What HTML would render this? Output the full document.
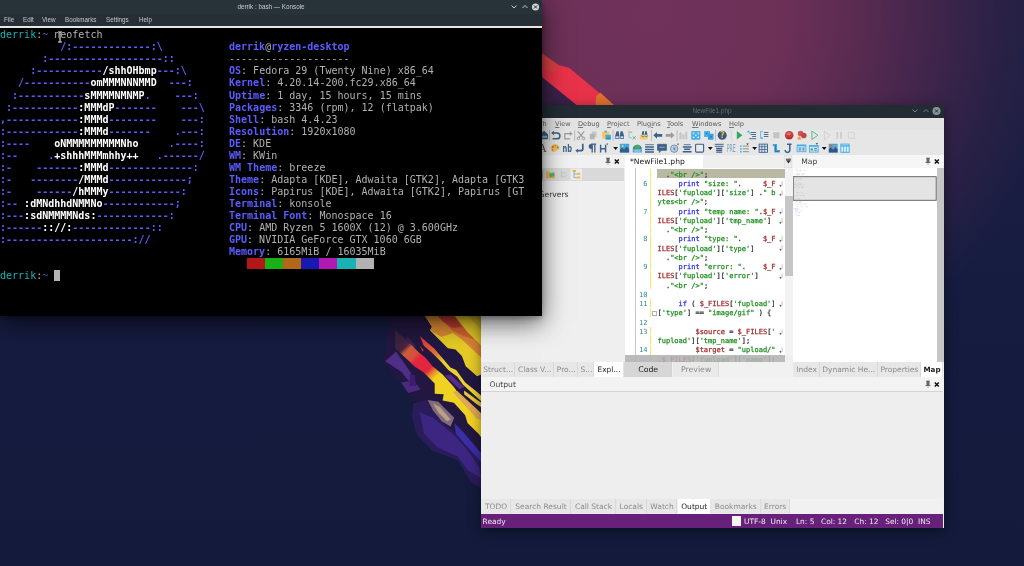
<!DOCTYPE html>
<html lang="en"><head><meta charset="utf-8"><title>Desktop</title>
<style>
html,body{margin:0;padding:0;}
body{width:1024px;height:566px;overflow:hidden;background:#151a3c;font-family:"DejaVu Sans","Liberation Sans",sans-serif;}
#desk{position:relative;width:1024px;height:566px;overflow:hidden;
 background:
  radial-gradient(ellipse 410px 390px at 655px 15px, #70325a 0%, #6c3057 32%, #592b51 50%, #40254b 68%, rgba(44,33,70,0.85) 84%, rgba(29,30,66,0) 100%),
  linear-gradient(180deg,#1d1f44 0%, #161c40 50%, #131a3b 100%);}
#kon{position:absolute;left:0;top:0;width:542px;height:315.5px;background:#000;box-shadow:0 7px 24px rgba(0,0,0,.62),0 2px 6px rgba(0,0,0,.3);}
.ktitle{position:absolute;left:0;top:0;width:542px;height:14px;background:#283339;}
.kt{position:absolute;left:0;width:542px;text-align:center;top:3px;font-size:6.3px;line-height:8px;color:#c9cdd0;font-family:"Liberation Sans",sans-serif;}
.kbtn{position:absolute;left:510px;top:1px;}
.kmenu{position:absolute;left:0;top:14px;width:542px;height:12px;background:#252f35;font-size:6.3px;line-height:12px;color:#c5c9cc;font-family:"Liberation Sans",sans-serif;}
.kmenu span{position:absolute;top:0}
.kmenu span:nth-child(1){left:4px}.kmenu span:nth-child(2){left:23px}.kmenu span:nth-child(3){left:42px}
.kmenu span:nth-child(4){left:65px}.kmenu span:nth-child(5){left:106px}.kmenu span:nth-child(6){left:139px}
.kline{position:absolute;left:0;top:26px;width:542px;height:2px;background:#e6e6e6;}
.kterm{position:absolute;left:0;top:28px;margin:0;padding-top:1.3px;width:542px;height:285.7px;overflow:hidden;
 font-family:"DejaVu Sans Mono","Liberation Mono",monospace;font-size:10px;line-height:12.04px;color:#b2b2b2;letter-spacing:0.005px;}
.kterm b{font-weight:bold}
.kterm .b{color:#5c5cff}
.kterm .w{color:#fff}
.kterm .g{color:#b2b2b2}
.kterm .c{color:#18b2b2}
.kterm .db{color:#4050a8}
.kterm .cur{background:#b2b2b2}
.ibeam{position:absolute;left:57.4px;top:31px;}
#ide{position:absolute;left:481px;top:105px;width:462.6px;height:422.5px;background:#efefef;box-shadow:0 3px 12px rgba(0,0,0,.45);font-size:7.5px;color:#3b3b3b;overflow:hidden}
#ide > *{position:absolute}
.ititle{left:0;top:0;width:463px;height:12.5px;background:#222c32}
.it{position:absolute;left:0;width:462px;text-align:center;top:2.3px;font-size:6.4px;line-height:8px;color:#626c71;font-family:"Liberation Sans",sans-serif}
.ibtn{position:absolute;left:430.4px;top:-0.2px}
.imenu{left:0;top:12.5px;width:463px;height:12px;background:#e3e3e3;font-size:6.6px;line-height:12px;color:#5a5a5a}
.imenu span{position:absolute;top:0}
.imenu u{text-decoration:underline;text-decoration-thickness:0.6px;text-underline-offset:0.6px;text-decoration-color:#777}
.itool{left:0;top:24.5px;width:463px;height:25.5px;background:#e6e6e6}
.lhead{left:0;top:50px;width:144px;height:13px;background:#f1f1f1}
.pin{width:16px;height:10px;line-height:0}
.etabbar{left:144px;top:50px;width:159px;height:13px;background:#efefef}
.etab{left:144px;top:50px;width:77.5px;height:13px;background:#fff;color:#222;font-size:7.6px;line-height:13px;text-indent:5px;white-space:nowrap}
.edrop{left:302.8px;top:50px;width:8.6px;height:13px;background:#ececec;line-height:0;box-shadow:inset 0 0 0 0.5px #dadada}
.mhead{left:312.3px;top:50px;width:150px;height:13px;background:#f6f6f6;font-size:7.6px;line-height:13px;text-indent:8px;color:#444}
.lpanel{left:0;top:63px;width:144px;height:194px;background:#efefef}
.ltool{position:absolute;left:0;top:0.2px;width:143px;height:12.6px;background:#d9d9d9}
.ltxt{position:absolute;font-size:7.6px;line-height:10px;color:#333}
.editor{left:144px;top:63px;width:160px;height:194px;background:#fff;overflow:hidden}
.vscroll{left:304.4px;top:63px;width:7.9px;height:187px;background:#f3f3f3}
.vthumb{position:absolute;left:0;top:28.4px;width:7.9px;height:79.5px;background:#c6c6c6}
.hscroll{left:143.6px;top:250px;width:160.6px;height:7px;background:rgba(178,178,178,.88)}
.map{left:312.3px;top:63px;width:150px;height:194px;background:#fff}
.mscroll{position:absolute;left:143.4px;top:0;width:7px;height:194px;background:#c6c6c6}
.btabs{left:0;top:257px;width:462px;height:15px;background:#f1f1f1}
.tab{position:absolute;top:0;height:15px;line-height:15px;text-align:center;white-space:nowrap;background:#e7e7e7;color:#8b8b8b;box-shadow:inset -0.6px 0 0 #d3d3d3;font-size:7.5px}
.tab.act{background:#fff;color:#1c1c1c}
.tab.bold{font-weight:bold;font-size:7.2px}
.tab.code{background:#d6d6d6;color:#222;font-size:7.8px}
.tab.prev{background:#e9e9e9;color:#8b8b8b;font-size:7.8px}
.ohead{left:0;top:272px;width:462px;height:14px;background:#f3f3f3;border-bottom:0.8px solid #d4d4d4}
.otitle{position:absolute;left:8.5px;top:0.9px;line-height:14px;font-size:7.6px;color:#444}
.obody{left:0;top:287px;width:462px;height:107px;background:#eeeeee}
.otabs{left:0;top:394px;width:462px;height:15.2px;background:#f1f1f1}
.status{left:0;top:409.2px;width:462px;height:13.4px;background:#68217a;color:#eee;font-size:7.4px;line-height:13.4px}
.status span{position:absolute;top:0.6px;white-space:nowrap}
.sq{position:absolute;top:2.2px;width:9.3px;height:9.3px;background:#f4f4f4}
.mline{position:absolute;left:10.3px;top:0;width:0.8px;height:194px;background:#c9c9c9}
.cl{position:absolute;left:0;width:160px;height:9.25px}
.cl pre{position:absolute;left:32.5px;top:1.6px;margin:0;font-family:"DejaVu Sans Mono","Liberation Mono",monospace;font-size:7px;line-height:9.25px;color:#333;font-weight:normal;-webkit-text-stroke:0.25px currentColor}
.cl.hl{background:linear-gradient(90deg,transparent 32.3px,#b9b9a3 32.3px)}
.cl .ln{position:absolute;right:137.5px;top:1.6px;font-family:"DejaVu Sans Mono","Liberation Mono",monospace;font-size:7px;line-height:9.25px;color:#2f8c8c}
.cl .ym{position:absolute;left:24.6px;top:0.3px;width:1.1px;height:8.6px;background:#f3ea62}
.cl .fold{position:absolute;left:26.6px;top:2.8px;width:3.6px;height:3.6px;border:0.5px solid #b0b0b0;background:linear-gradient(#fff 1.5px,#aaa 1.5px,#aaa 2.1px,#fff 2.1px)}
.cl .wm{position:absolute;left:153.6px;top:2.3px}
.cl .k{color:#2b2be6}
.cl .s{color:#1d8f1d}
.cl .v{color:#a02a2a}

#wall{position:absolute;left:0;top:0}
.kterm,.kmenu,.ktitle{filter:blur(0.35px)}
#ide > *{filter:blur(0.3px)}

</style></head>
<body>
<div id="desk">
<svg id="wall" width="1024" height="566" viewBox="0 0 1024 566"><defs><filter id="bl" x="-5%" y="-5%" width="110%" height="110%"><feGaussianBlur stdDeviation="0.7"/></filter></defs><g filter="url(#bl)"><polygon points="528.6,59.8 542.2,74.1 581.5,109.1 528.6,109.1" fill="#3a2449"/><polygon points="525.5,40.7 542.2,53.4 558.9,65.3 569.2,67.7 613.0,104.3 617.7,109.1 581.5,109.1 542.2,77.3 525.5,63.0" fill="#e8304a"/><polygon points="525.5,40.7 542.2,53.4 558.9,65.3 554.1,72.5 542.2,67.7 525.5,55.0" fill="#d6443c" opacity="0.8"/><polygon points="596.2,96.0 600.2,92.4 613.0,104.3 617.7,109.1 597.8,109.1 595.5,102.7" fill="#e0702f"/><polygon points="390.6,313.5 425.9,313.5 482.4,368.3 482.4,483.0 471.8,479.5 433.0,423.0 401.2,384.2 383.5,363.0" fill="#221a40" opacity="0.9"/><polygon points="395.9,351.5 403.0,361.2 413.5,377.1 410.0,382.4 401.2,371.8 385.3,361.2" fill="#4f2d88"/><polygon points="401.2,382.4 413.5,380.6 420.6,389.4 408.2,393.0" fill="#482a80"/><polygon points="406.5,336.5 415.3,345.3 415.3,368.3 410.0,363.0" fill="#3a2152"/><polygon points="413.5,403.5 427.7,400.0 433.0,410.6 441.8,421.2 455.9,433.5 464.7,444.1 481.0,461.8 481.0,488.3 471.8,483.0 457.7,460.0 433.0,451.2 417.1,435.3 411.8,417.7" fill="#2c1d5a"/><polygon points="419.7,412.4 433.0,417.7 454.2,435.3 468.3,451.2 478.9,467.1 481.0,477.7 468.3,470.6 457.7,456.5 438.3,447.7 424.1,433.5" fill="#41288a" opacity="0.85"/><polygon points="454.2,423.0 463.0,431.8 481.0,453.0 481.0,461.8 464.7,444.1 455.9,433.5" fill="#3a2ea6"/><polygon points="427.7,400.0 438.3,401.8 454.2,417.7 450.6,426.5 441.8,421.2 433.0,410.6" fill="#84697c"/><polygon points="433.0,403.5 440.0,407.1 450.6,419.4 447.1,421.2 438.3,412.4" fill="#b8a084"/><linearGradient id="s3" gradientUnits="userSpaceOnUse" x1="400" y1="338" x2="452" y2="392"><stop offset="0" stop-color="#3a2040"/><stop offset="0.13" stop-color="#4a2440"/><stop offset="0.19" stop-color="#cc5c3a"/><stop offset="0.3" stop-color="#d8503a"/><stop offset="0.37" stop-color="#e3283c"/><stop offset="0.57" stop-color="#e3283c"/><stop offset="0.64" stop-color="#e88a30"/><stop offset="0.71" stop-color="#f0d222"/><stop offset="1" stop-color="#f0d222"/></linearGradient><polygon points="395,330 411,344.5 418.6,352.2 425,357.3 432.6,366.2 442.6,374.5 453.9,387 459.6,394.9 481,415.2 481,437 478.8,434 467.5,423.1 465.2,415.2 453.9,402.8 442.6,400.5 443.7,394.3 434.7,393.7 434.7,383.6 423.4,372.3 416.1,367.4 403.4,356 395,348" fill="url(#s3)"/><polygon points="452.8,392 457.3,390.9 481,413 481,419.8 476.5,418.6" fill="#e0a850"/><polygon points="444.9,375.7 450.5,374.5 464.1,387 459.6,389.2" fill="#5a2a8c"/><polygon points="409.7,373.8 414.8,375.1 416.1,386.0 409.7,386.0" fill="#3c1c6c"/><linearGradient id="s2" gradientUnits="userSpaceOnUse" x1="420" y1="337" x2="450" y2="368"><stop offset="0" stop-color="#e02c3c"/><stop offset="0.3" stop-color="#e0503a"/><stop offset="0.55" stop-color="#e07a30"/><stop offset="0.8" stop-color="#ecd030"/><stop offset="1" stop-color="#ecd030"/></linearGradient><polygon points="419.9,336.3 423.7,339.4 433.9,348.3 442.8,358.5 450.4,367.4 456.2,370 465.2,382.4 476.5,391.5 481,395.5 481,401 476.5,397.1 463,384.7 457.3,376.8 448.3,370 441.5,362.3 431.4,352.2 423.7,345.8" fill="url(#s2)"/><polygon points="464.1,390.4 476.5,399.4 481,402.5 481,407 476.5,403.9 464.1,394.3" fill="#e6c830"/><polygon points="419.9,345.8 423.7,350.3 422.4,351.5" fill="#e02c3c"/><polygon points="423.7,314.0 483.0,314.0 483.0,373.8 477.1,376.3 465.7,366.2 461.9,356.0 455.5,349.6 447.9,348.3 430.1,330.5 432.0,326.7" fill="#e6ca28"/><polygon points="423.7,314.0 436.4,314.0 442.8,321.6 453.0,333.1 441.5,336.9 430.1,330.5 432.0,326.7" fill="#dc8a35"/><polygon points="436.4,314.0 453.0,314.0 463.2,326.7 467.0,331.8 483.0,347.3 483.0,359.2 461.9,339.4 453.0,333.1 442.8,321.6" fill="#d98436"/><polygon points="436.4,314.0 453.0,314.0 463.2,326.7 467.0,331.8 474.6,339.4 461.9,335.6 453.0,330.5 442.8,321.6" fill="#d06230"/><polygon points="436.4,314.0 453.0,314.0 461.9,326.7 453.0,328.0 442.8,321.6" fill="#b83a30"/><polygon points="465.7,314.0 483.0,314.0 483.0,331.8" fill="#c4ae30" opacity="0.7"/></g></svg>
<div id="ide">
<div class="ititle"><span class="it">NewFile1.php</span><svg class="ibtn" width="30" height="12" viewBox="0 0 30 12"><path d="M1.5 4.5 L4 7 L6.5 4.5" fill="none" stroke="#747d82" stroke-width="1"/><path d="M12.5 7 L15 4.5 L17.5 7" fill="none" stroke="#747d82" stroke-width="1"/><circle cx="25.5" cy="6" r="4" fill="#8d9498"/><path d="M24 4.5 L27 7.5 M27 4.5 L24 7.5" stroke="#232d33" stroke-width="1"/></svg></div>
<div class="imenu">
<span style="left:43px">Search</span>
<span style="left:74px"><u>V</u>iew</span>
<span style="left:97px"><u>D</u>ebug</span>
<span style="left:126px"><u>P</u>roject</span>
<span style="left:156px">Plug<u>i</u>ns</span>
<span style="left:186px"><u>T</u>ools</span>
<span style="left:211px"><u>W</u>indows</span>
<span style="left:248px"><u>H</u>elp</span>
</div>
<div class="itool">
<svg width="462" height="25.5" viewBox="0 0 462 25.5" style="position:absolute;left:0;top:0"><g transform="translate(63 5.3)"><path d="M-4 -1 L0 -4.5 L4 -1 V4 H-4 Z" fill="#3c6088"/><rect x="-3" y="0.5" width="6" height="2" fill="#9fb6cc"/></g><rect x="68.2" y="-0.2" width="0.7" height="11" fill="#a8a8a8"/><g transform="translate(74.8 5.3)"><path d="M-2.5 -2.3 H1.2 A2.9 2.9 0 0 1 1.2 3.5 H-3.2" fill="none" stroke="#3c6088" stroke-width="1.5"/><path d="M-4.6 -2.3 L-1.8 -4.6 V0 Z" fill="#3c6088"/></g><g transform="translate(86.8 5.3)"><path d="M3.2 -1.6 H-3 V3.6 H2.5" fill="none" stroke="#9b9b9b" stroke-width="1.2"/><path d="M4.8 -1.6 L2 -4 V0.8 Z" fill="#9b9b9b"/></g><rect x="93.4" y="-0.2" width="0.7" height="11" fill="#a8a8a8"/><g transform="translate(100 5.3)"><path d="M-3.2 -4 L2 2.4 M3.2 -4 L-2 2.4" stroke="#9b9b9b" stroke-width="1.2" fill="none"/><circle cx="-2.6" cy="3.1" r="1.3" fill="none" stroke="#9b9b9b" stroke-width="1"/><circle cx="2.6" cy="3.1" r="1.3" fill="none" stroke="#9b9b9b" stroke-width="1"/></g><g transform="translate(112.4 5.3)"><rect x="-1.5" y="-3.8" width="4.6" height="5.6" fill="#c6c6c6"/><rect x="-3.6" y="-1.6" width="4.8" height="5.6" fill="#b4b4b4"/></g><g transform="translate(125.4 5.3)"><rect x="-4.4" y="-3.6" width="7.4" height="7" rx="0.6" fill="#f6c95a"/><rect x="-2" y="-4.6" width="2.6" height="1.6" fill="#59a9df"/><rect x="-1" y="-0.6" width="5.6" height="5" rx="0.5" fill="#46a7e3"/><rect x="0.2" y="2.4" width="3.2" height="0.8" fill="#2c6d9e"/></g><rect x="131.7" y="-0.2" width="0.7" height="11" fill="#a8a8a8"/><g transform="translate(138.6 5.3)"><path d="M-4.3 3.8 V0 L-3 -4 H-1 L-0.3 0 V3.8 Z M4.3 3.8 V0 L3 -4 H1 L0.3 0 V3.8 Z" fill="#3c6088"/><rect x="-3.7" y="1" width="2.8" height="2" fill="#c7dced"/><rect x="0.9" y="1" width="2.8" height="2" fill="#c7dced"/></g><g transform="translate(151 5.3)"><path d="M-3 -2.5 V2.6 H0" fill="none" stroke="#7fc3d6" stroke-width="0.9"/><rect x="-4" y="-4.4" width="2.4" height="2" fill="#f0c46a"/><rect x="-1.6" y="-3.8" width="1.8" height="1.6" fill="#8bc1e8"/><path d="M0.6 1 L3.8 4 M3.8 1 L0.6 4" stroke="#53b184" stroke-width="0.9"/></g><g transform="translate(163.4 5.3)"><path d="M-4.6 -0.5 H4 L3 4.2 H-4.6 Z" fill="#f6c95a"/><path d="M-2.6 1.5 V-1.5 L-1.8 -4.4 H-0.6 L-0.2 -1.5 V1.5 Z M2.9 1.5 V-1.5 L2.1 -4.4 H0.9 L0.5 -1.5 V1.5 Z" fill="#3c6088"/><rect x="-2.2" y="-0.6" width="1.7" height="1.5" fill="#d5e6f2"/><rect x="0.8" y="-0.6" width="1.7" height="1.5" fill="#d5e6f2"/></g><rect x="170.1" y="-0.2" width="0.7" height="11" fill="#a8a8a8"/><g transform="translate(177 5.3)"><path d="M-4.6 0 L-1 -3.4 V-1.4 H4.2 V1.4 H-1 V3.4 Z" fill="#3c6088"/></g><g transform="translate(188.9 5.3)"><path d="M4.6 0 L1 -3.4 V-1.4 H-4.2 V1.4 H1 V3.4 Z" fill="#9b9b9b"/></g><rect x="195.7" y="-0.2" width="0.7" height="11" fill="#a8a8a8"/><g transform="translate(202.3 5.3)"><path d="M-4 4 V-2 L-2.8 -3.6 L-1.6 -2 V4 Z M-0.8 4 V-1 H1.2 V4 Z M2 4 V-3.6 H4 V4 Z" fill="#c6c6c6"/></g><g transform="translate(214.8 5.3)"><rect x="-4.6" y="-4.4" width="9.2" height="8.8" rx="0.8" fill="#45b0ea"/><path d="M-3 -2.8 L-0.8 -2.8 L-3 -0.6 Z M3 -2.8 L0.8 -2.8 L3 -0.6 Z M-3 2.8 L-0.8 2.8 L-3 0.6 Z M3 2.8 L0.8 2.8 L3 0.6 Z" fill="#d8efff"/><circle cx="0" cy="0" r="0.9" fill="#d8efff"/></g><g transform="translate(227.7 5.3)"><rect x="-4.6" y="-4.2" width="6" height="6" rx="0.6" fill="#45b0ea"/><rect x="-0.8" y="-1.6" width="5.6" height="6" rx="0.6" fill="#3b9fdf"/><path d="M-3 -1.2 L-1 -2.6 M1 2.4 L3 1" stroke="#27638f" stroke-width="0.9"/></g><rect x="234.2" y="-0.2" width="0.7" height="11" fill="#a8a8a8"/><g transform="translate(241.2 5.3)"><circle cx="0" cy="0" r="4.5" fill="#375a80"/><text x="0" y="3" text-anchor="middle" font-family="DejaVu Sans,sans-serif" font-weight="bold" font-size="8" fill="#f0c040">?</text></g><g transform="translate(250.2 5.3)"><path d="M-1.5 -5.5 Q1.6 -3 0.2 0 Q-1.2 3 1.6 5.5" fill="none" stroke="#c9c9c9" stroke-width="0.7"/></g><g transform="translate(258.2 5.3)"><path d="M-2.4 -4.2 L3.2 0 L-2.4 4.2 Z" fill="#2fa862"/></g><g transform="translate(270.7 5.3)"><path d="M-1 -2.8 H4.4 M-1 -0.8 H4.4 M0.4 1.2 H4.4 M-2.4 3.4 H4.4" stroke="#3c6088" stroke-width="0.9"/><path d="M-3.6 -3.8 Q-1.6 -4.6 -1.8 -1" fill="none" stroke="#45b0ea" stroke-width="0.8"/><circle cx="-3.6" cy="-3.6" r="0.9" fill="#45b0ea"/></g><g transform="translate(283 5.3)"><path d="M-0.2 -2.8 H4.4 M-0.2 -0.8 H4.4 M-0.2 1.2 H4.4" stroke="#3c6088" stroke-width="0.9"/><path d="M-1 -4 H-3.4 V3 H-1.4" fill="none" stroke="#45b0ea" stroke-width="0.8"/><path d="M-3.2 2 L-2 4.2 L-0.8 2.6 Z" fill="#45b0ea"/></g><g transform="translate(295.4 5.3)"><rect x="-3.2" y="-3" width="6.4" height="6" rx="0.4" fill="#c4c4c4"/></g><g transform="translate(308.2 5.3)"><circle cx="0" cy="0" r="4.3" fill="#c43c3c"/><ellipse cx="-0.4" cy="-1.6" rx="2.6" ry="1.5" fill="#de7c74" opacity=".8"/><path d="M-2.6 2.4 Q0 3.8 2.6 2.4" stroke="#8e2222" stroke-width="0.8" fill="none"/></g><g transform="translate(320.8 5.3)"><circle cx="-1.2" cy="-1.8" r="2.8" fill="#cf5656"/><circle cx="2" cy="0.2" r="2.8" fill="#c44444"/><path d="M-2.6 0.6 L-1.8 2.2 L0 2.4 L-1.4 3.4 L-1 5 L-2.6 4 L-4.2 5 L-3.8 3.4 L-5 2.4 L-3.4 2.2 Z" fill="#f59a23"/></g><g transform="translate(333.5 5.3)"><path d="M-2.6 -4.2 L3.4 0 L-2.6 4.2 Z" fill="none" stroke="#4fb87a" stroke-width="0.9"/></g><g transform="translate(345.9 5.3)"><path d="M-2.6 -4.2 L3.4 0 L-2.6 4.2 Z" fill="none" stroke="#cfcfcf" stroke-width="0.9"/></g><g transform="translate(358.2 5.3)"><rect x="-2.8" y="-3.4" width="1.8" height="6.8" fill="#cdcdcd"/><rect x="1" y="-3.4" width="1.8" height="6.8" fill="#cdcdcd"/></g><g transform="translate(370.4 5.3)"><rect x="-3" y="-3" width="6" height="6" rx="0.4" fill="none" stroke="#d0d0d0" stroke-width="0.9"/></g><g transform="translate(61.5 18.1)"><text x="0" y="4" text-anchor="middle" font-family="DejaVu Serif,serif" font-size="11" fill="#555">A</text></g><g transform="translate(74 18.1)"><path d="M-4.4 0.4 A4.4 4 0 1 1 3.8 2 Q2.4 1.2 1.4 2.4 Q0.6 4.2 -1.4 4 A4.4 4 0 0 1 -4.4 0.4 Z" fill="#f5c35c"/><circle cx="-2.2" cy="-1.2" r="1" fill="#e0553d"/><circle cx="0.4" cy="-2.4" r="1" fill="#e58a2a"/><circle cx="2.8" cy="-0.8" r="1.1" fill="#3fb77b"/><circle cx="-2.4" cy="1.8" r="0.8" fill="#c75cae"/></g><g transform="translate(86.3 18.1)"><text x="0" y="3.6" text-anchor="middle" font-family="DejaVu Sans Condensed,DejaVu Sans,sans-serif" font-size="10.5" font-weight="bold" fill="#3c6088" textLength="9.4" lengthAdjust="spacingAndGlyphs">nb</text></g><g transform="translate(99 18.1)"><path d="M2.8 -4.4 V0.6 Q2.8 2.6 0.8 2.6 H-2.4" fill="none" stroke="#3c6088" stroke-width="1.7"/><path d="M-4.6 2.6 L-2 0.6 V4.6 Z" fill="#3c6088"/></g><g transform="translate(111 18.1)"><path d="M0.2 -4 V4.4 M2.8 -4 V4.4 M-1 -4 H4.2" stroke="#3c6088" stroke-width="1.3" fill="none"/><path d="M0.2 -4 H-1 A2.4 2.4 0 0 0 -1 0.8 H0.2 Z" fill="#3c6088"/></g><g transform="translate(122.6 18.1)"><path d="M-3 -3.4 V4.4 M2 -3.4 V4.4 M-3 0.6 H2" stroke="#3c6088" stroke-width="1.4" fill="none"/><rect x="3" y="-4.6" width="1.4" height="1.2" fill="#555"/></g><g transform="translate(134.6 18.1)"><path d="M-2.4 -1 H2.4 L0 1.8 Z" fill="#111"/></g><g transform="translate(143.5 18.1)"><rect x="-4.6" y="-4.4" width="9.2" height="8.8" rx="0.6" fill="#47a4e0"/><path d="M-4.6 4.4 V1.6 L-2.4 -0.4 L-0.4 1.4 L2 -1.6 L4.6 1 V4.4 Z" fill="#2f5f8a"/><circle cx="-1.8" cy="-2.2" r="1" fill="#f3d15a"/></g><g transform="translate(156.3 18.1)"><path d="M-4.6 1.4 A4.6 4.8 0 0 1 4.6 1.4 Z" fill="#3a7f8c"/><path d="M-2 -2.8 Q0 -4.2 2.4 -2.6 Q3.6 -0.8 2 0.6 H-2.4 Q-3.4 -1.2 -2 -2.8 Z" fill="#3fae66"/><rect x="-4.6" y="1.4" width="9.2" height="3" rx="0.6" fill="#58a7dc"/><path d="M-3 2.9 H3" stroke="#d8ecf8" stroke-width="0.7"/></g><g transform="translate(168.5 18.1)"><path d="M-4.4 -3.4 H4.4" stroke="#3c6088" stroke-width="0.8"/><path d="M-4.4 -1 H4.4 M-4.4 1.4 H4.4 M-4.4 3.8 H4.4" stroke="#3c6088" stroke-width="1.5"/></g><g transform="translate(181 18.1)"><path d="M-4.4 -3.8 H4.4 V2.2 H-1 L-2.6 4.4 V2.2 H-4.4 Z" fill="#3c6088" stroke="#3c6088" stroke-width="0.8" stroke-linejoin="round"/><path d="M-2.6 -0.8 H2.8" stroke="#9bb7d1" stroke-width="0.9"/></g><g transform="translate(193.6 18.1)"><circle cx="-0.4" cy="0.6" r="3.7" fill="#b8cfe2" stroke="#6b8cad" stroke-width="0.9"/><path d="M-1.6 0.6 L0.6 -1.2 V2.4 Z" fill="#5b7fa3"/><path d="M2.2 -4.4 H4.6 L3.4 -3 Z" fill="#333"/></g><g transform="translate(206.2 18.1)"><path d="M-3.4 -3.4 H3.4" stroke="#3c6088" stroke-width="0.8"/><path d="M-4.4 -1.2 H4.4 M-3 1.2 H3 M-4.4 3.6 H4.4" stroke="#3c6088" stroke-width="1.5"/></g><g transform="translate(218.6 18.1)"><rect x="-4" y="-3.8" width="8" height="7.8" rx="0.8" fill="#eaeaea" stroke="#3c6088" stroke-width="1.1"/></g><g transform="translate(229.3 18.1)"><path d="M-2.4 -1 H2.4 L0 1.8 Z" fill="#111"/></g><g transform="translate(238.2 18.1)"><path d="M-4.4 -3.8 H4.4 M-4.4 -1.8 H4.4" stroke="#3c6088" stroke-width="1"/><path d="M-3 0.4 H3 M-3 2.2 H3 M-3 4 H3" stroke="#3c6088" stroke-width="1.3"/></g><g transform="translate(250.3 18.1)"><text x="0" y="4" text-anchor="middle" font-family="DejaVu Sans Condensed,DejaVu Sans,sans-serif" font-size="10.5" fill="#7ea2c2" textLength="9" lengthAdjust="spacingAndGlyphs" font-weight="normal">PRE</text></g><g transform="translate(263.5 18.1)"><path d="M-1.6 -2 H4.4 M-1.6 0.8 H4.4 M-1.6 3.6 H4.4" stroke="#777" stroke-width="0.8"/><circle cx="-3.6" cy="-2" r="0.9" fill="#45b0ea"/><circle cx="-3.6" cy="0.8" r="0.9" fill="#45b0ea"/><circle cx="-3.6" cy="3.6" r="0.9" fill="#45b0ea"/><path d="M1.6 -4.6 H4.4 L3 -3 Z" fill="#333"/></g><g transform="translate(273.6 18.1)"><path d="M-2.4 -1 H2.4 L0 1.8 Z" fill="#111"/></g><g transform="translate(282.3 18.1)"><rect x="-4.2" y="-4" width="8.4" height="8.2" fill="#dfe8f0" stroke="#3c6088" stroke-width="0.9"/><path d="M-1.4 -4 V4.2 M1.4 -4 V4.2 M-4.2 -1.4 H4.2 M-4.2 1.4 H4.2" stroke="#3c6088" stroke-width="0.8"/></g><g transform="translate(295.2 18.1)"><path d="M-3.4 -4 H0.8 V2 H3.8 V4.4 H-2 V-1.8 H-3.4 Z" fill="#43a6e3"/><path d="M-0.6 -3 V3.4 H2.8" stroke="#2a6a9a" stroke-width="0.8" fill="none"/></g><g transform="translate(307.2 18.1)"><path d="M-1.2 -3.8 H3.4 M1.6 -3.8 V2 A2.3 2.3 0 0 1 -3 2" fill="none" stroke="#3c6088" stroke-width="1.5"/></g><g transform="translate(320.5 18.1)"><rect x="-4.4" y="-3" width="8.8" height="6.6" fill="#cfe6f7" stroke="#45b0ea" stroke-width="0.9"/><rect x="-4.4" y="-3.4" width="8.8" height="1.6" fill="#45b0ea"/><path d="M-2.8 0 H-0.4 M0.8 0 H3 M-2.8 1.8 H-0.4 M0.8 1.8 H3" stroke="#3c6088" stroke-width="0.9"/></g><g transform="translate(332.8 18.1)"><rect x="-4.4" y="-2.4" width="8.8" height="6.4" fill="#cfe6f7" stroke="#45b0ea" stroke-width="0.9"/><rect x="-4.4" y="-2.8" width="8.8" height="1.5" fill="#45b0ea"/><circle cx="-2" cy="1.4" r="1.2" fill="#3fb060"/><path d="M0.4 0.4 H3 M0.4 2.2 H3" stroke="#3c6088" stroke-width="0.8"/><path d="M1.8 -4.8 H4.4 L3.1 -3.4 Z" fill="#333"/></g><g transform="translate(343.2 18.1)"><path d="M-2.4 -1 H2.4 L0 1.8 Z" fill="#111"/></g><g transform="translate(352.2 18.1)"><rect x="-4.4" y="-4.4" width="8.8" height="8.8" rx="0.5" fill="#4a9fdb"/><path d="M-4.4 4.4 V1 L-2.2 -0.6 L0 1.6 L2.2 -0.8 L4.4 1.2 V4.4 Z" fill="#2d5884"/><rect x="-3.4" y="-3.6" width="1.6" height="3.4" fill="#e2683c"/><path d="M-1 -2.4 H3.6" stroke="#e79a5a" stroke-width="0.7"/></g><g transform="translate(364 18.1)"><rect x="-4.2" y="-4" width="8.4" height="8.2" fill="#d9effc" stroke="#45b0ea" stroke-width="1"/><path d="M-4.2 -2.2 H4.2" stroke="#45b0ea" stroke-width="1.4"/><path d="M-1.4 -2 V4.2 M1.4 -2 V4.2" stroke="#45b0ea" stroke-width="0.8"/></g></svg>
</div>
<div class="lhead"></div>
<span class="pin" style="left:123px;top:52px"><svg width="16" height="10" viewBox="0 0 16 10"><rect x="2.5" y="1" width="3" height="4.3" fill="#666"/><path d="M2.1 1.1 H5.9" stroke="#555" stroke-width="0.7"/><path d="M1.6 5.5 H6.4" stroke="#444" stroke-width="0.8"/><path d="M4 5.8 V8" stroke="#999" stroke-width="0.7"/><path d="M10.8 2.5 L14.8 6.5 M14.8 2.5 L10.8 6.5" stroke="#111" stroke-width="1.5"/></svg></span>
<div class="etabbar"></div>
<div class="etab">*NewFile1.php</div>
<div class="edrop"><svg width="9" height="13" viewBox="0 0 9 13"><path d="M2 5.2 H7 L4.5 8.6 Z" fill="#333"/><path d="M2 4.2 H7" stroke="#333" stroke-width="1"/></svg></div>
<div class="mhead">Map</div>
<span class="pin" style="left:443px;top:52px"><svg width="16" height="10" viewBox="0 0 16 10"><rect x="2.5" y="1" width="3" height="4.3" fill="#666"/><path d="M2.1 1.1 H5.9" stroke="#555" stroke-width="0.7"/><path d="M1.6 5.5 H6.4" stroke="#444" stroke-width="0.8"/><path d="M4 5.8 V8" stroke="#999" stroke-width="0.7"/><path d="M10.8 2.5 L14.8 6.5 M14.8 2.5 L10.8 6.5" stroke="#111" stroke-width="1.5"/></svg></span>
<div class="lpanel"><div class="ltool"><svg width="143" height="12.6" viewBox="0 0 143 12.6" style="position:absolute;left:0;top:0"><rect x="89.5" y="0.6" width="11.4" height="11.4" fill="#ececec"/><rect x="56" y="2" width="5.6" height="8.6" fill="#4a9fdb"/><path d="M65 3.4 H68.4 L69.2 4.4 H74 V10.2 H65 Z" fill="#efb54a"/><path d="M68 6 L72.6 4.4 L73.6 8 L69 9.6 Z" fill="#4eb37c"/><path d="M80.4 3 V9.4 M80.4 5 H83 M80.4 8.6 H83" stroke="#c2c2c2" stroke-width="0.8" fill="none"/><rect x="83" y="4" width="2.4" height="1.8" fill="#cfcfcf"/><rect x="83" y="7.6" width="2.4" height="1.8" fill="#cfcfcf"/><rect x="79.2" y="1.6" width="2.6" height="1.6" fill="#d9d9d9"/><path d="M93 3.6 V10 M93 6 H96 M93 9.6 H96" stroke="#6aa9d8" stroke-width="0.8" fill="none"/><rect x="91.6" y="2" width="3.4" height="2" fill="#f0b040"/><rect x="96" y="4.8" width="3.2" height="2.2" fill="#f0b85a"/><rect x="96" y="8.4" width="3.2" height="2.2" fill="#f0b85a"/></svg>
</div><div class="ltxt" style="left:58.7px;top:21.7px">Servers</div></div>
<div class="editor"><i class="mline"></i><div class="cl hl" style="top:1.1px"><i class="ym"></i><pre>  .<span class="s">&quot;&lt;br /&gt;&quot;</span>;</pre></div>
<div class="cl" style="top:10.35px"><span class="ln">6</span><i class="ym"></i><pre>     <span class="k">print</span> <span class="s">&quot;size: &quot;</span>.     <span class="v">$_F</span></pre><svg class="wm" width="4" height="7" viewBox="0 0 4 7"><path d="M3.1 0.4 V4.8 H1.4" fill="none" stroke="#9a9a9a" stroke-width="0.6"/><path d="M0.2 4.8 L1.9 3.6 V6 Z" fill="#555"/></svg></div>
<div class="cl" style="top:19.6px"><i class="ym"></i><pre><span class="v">ILES</span>[<span class="s">&#x27;fupload&#x27;</span>][<span class="s">&#x27;size&#x27;</span>] .<span class="s">&quot; b</span></pre><svg class="wm" width="4" height="7" viewBox="0 0 4 7"><path d="M3.1 0.4 V4.8 H1.4" fill="none" stroke="#9a9a9a" stroke-width="0.6"/><path d="M0.2 4.8 L1.9 3.6 V6 Z" fill="#555"/></svg></div>
<div class="cl" style="top:28.85px"><i class="ym"></i><pre><span class="s">ytes&lt;br /&gt;&quot;</span>;</pre></div>
<div class="cl" style="top:38.1px"><span class="ln">7</span><i class="ym"></i><pre>     <span class="k">print</span> <span class="s">&quot;temp name: &quot;</span>.<span class="v">$_F</span></pre><svg class="wm" width="4" height="7" viewBox="0 0 4 7"><path d="M3.1 0.4 V4.8 H1.4" fill="none" stroke="#9a9a9a" stroke-width="0.6"/><path d="M0.2 4.8 L1.9 3.6 V6 Z" fill="#555"/></svg></div>
<div class="cl" style="top:47.35px"><i class="ym"></i><pre><span class="v">ILES</span>[<span class="s">&#x27;fupload&#x27;</span>][<span class="s">&#x27;tmp_name&#x27;</span>] </pre><svg class="wm" width="4" height="7" viewBox="0 0 4 7"><path d="M3.1 0.4 V4.8 H1.4" fill="none" stroke="#9a9a9a" stroke-width="0.6"/><path d="M0.2 4.8 L1.9 3.6 V6 Z" fill="#555"/></svg></div>
<div class="cl" style="top:56.6px"><i class="ym"></i><pre>  .<span class="s">&quot;&lt;br /&gt;&quot;</span>;</pre></div>
<div class="cl" style="top:65.85px"><span class="ln">8</span><i class="ym"></i><pre>     <span class="k">print</span> <span class="s">&quot;type: &quot;</span>.     <span class="v">$_F</span></pre><svg class="wm" width="4" height="7" viewBox="0 0 4 7"><path d="M3.1 0.4 V4.8 H1.4" fill="none" stroke="#9a9a9a" stroke-width="0.6"/><path d="M0.2 4.8 L1.9 3.6 V6 Z" fill="#555"/></svg></div>
<div class="cl" style="top:75.1px"><i class="ym"></i><pre><span class="v">ILES</span>[<span class="s">&#x27;fupload&#x27;</span>][<span class="s">&#x27;type&#x27;</span>]     </pre><svg class="wm" width="4" height="7" viewBox="0 0 4 7"><path d="M3.1 0.4 V4.8 H1.4" fill="none" stroke="#9a9a9a" stroke-width="0.6"/><path d="M0.2 4.8 L1.9 3.6 V6 Z" fill="#555"/></svg></div>
<div class="cl" style="top:84.35px"><i class="ym"></i><pre>  .<span class="s">&quot;&lt;br /&gt;&quot;</span>;</pre></div>
<div class="cl" style="top:93.6px"><span class="ln">9</span><i class="ym"></i><pre>     <span class="k">print</span> <span class="s">&quot;error: &quot;</span>.    <span class="v">$_F</span></pre><svg class="wm" width="4" height="7" viewBox="0 0 4 7"><path d="M3.1 0.4 V4.8 H1.4" fill="none" stroke="#9a9a9a" stroke-width="0.6"/><path d="M0.2 4.8 L1.9 3.6 V6 Z" fill="#555"/></svg></div>
<div class="cl" style="top:102.85px"><i class="ym"></i><pre><span class="v">ILES</span>[<span class="s">&#x27;fupload&#x27;</span>][<span class="s">&#x27;error&#x27;</span>]    </pre><svg class="wm" width="4" height="7" viewBox="0 0 4 7"><path d="M3.1 0.4 V4.8 H1.4" fill="none" stroke="#9a9a9a" stroke-width="0.6"/><path d="M0.2 4.8 L1.9 3.6 V6 Z" fill="#555"/></svg></div>
<div class="cl" style="top:112.1px"><i class="ym"></i><pre>  .<span class="s">&quot;&lt;br /&gt;&quot;</span>;</pre></div>
<div class="cl" style="top:121.35px"><span class="ln">10</span><pre></pre></div>
<div class="cl" style="top:130.6px"><span class="ln">11</span><i class="ym"></i><pre>     <span class="k">if</span> ( <span class="v">$_FILES</span>[<span class="s">&#x27;fupload&#x27;</span>]</pre><svg class="wm" width="4" height="7" viewBox="0 0 4 7"><path d="M3.1 0.4 V4.8 H1.4" fill="none" stroke="#9a9a9a" stroke-width="0.6"/><path d="M0.2 4.8 L1.9 3.6 V6 Z" fill="#555"/></svg></div>
<div class="cl" style="top:139.85px"><i class="ym"></i><i class="fold"></i><pre>[<span class="s">&#x27;type&#x27;</span>] == <span class="s">&quot;image/gif&quot;</span> ) {</pre></div>
<div class="cl" style="top:149.1px"><span class="ln">12</span><pre></pre></div>
<div class="cl" style="top:158.35px"><span class="ln">13</span><i class="ym"></i><pre>         <span class="v">$source</span> = <span class="v">$_FILES</span>[<span class="s">&#x27;</span></pre><svg class="wm" width="4" height="7" viewBox="0 0 4 7"><path d="M3.1 0.4 V4.8 H1.4" fill="none" stroke="#9a9a9a" stroke-width="0.6"/><path d="M0.2 4.8 L1.9 3.6 V6 Z" fill="#555"/></svg></div>
<div class="cl" style="top:167.6px"><i class="ym"></i><pre><span class="s">fupload&#x27;</span>][<span class="s">&#x27;tmp_name&#x27;</span>];</pre></div>
<div class="cl" style="top:176.85px"><span class="ln">14</span><i class="ym"></i><pre>         <span class="v">$target</span> = <span class="s">&quot;upload/&quot;</span></pre><svg class="wm" width="4" height="7" viewBox="0 0 4 7"><path d="M3.1 0.4 V4.8 H1.4" fill="none" stroke="#9a9a9a" stroke-width="0.6"/><path d="M0.2 4.8 L1.9 3.6 V6 Z" fill="#555"/></svg></div>
<div class="cl" style="top:186.1px"><i class="ym"></i><pre>.<span class="v">$_FILES</span>[<span class="s">&#x27;fupload&#x27;</span>][<span class="s">&#x27;name&#x27;</span>];</pre></div></div>
<div class="vscroll"><div class="vthumb"></div></div>
<div class="hscroll"></div>
<div class="map"><svg width="150" height="60" viewBox="0 0 150 60" style="position:absolute;left:0;top:0"><rect x="0.2" y="8.7" width="143" height="23.6" fill="#e4e4e4" stroke="#5a5a5a" stroke-width="0.9"/><g opacity="0.5"><rect x="1.5" y="0.8" width="3.6" height="0.55" fill="#bdbdbd"/><rect x="6.7" y="0.8" width="1.2" height="0.55" fill="#d08a8a"/><rect x="2.5" y="2.2" width="2" height="0.55" fill="#bdbdbd"/><rect x="5.5" y="2.2" width="3.6" height="0.55" fill="#7cc47c"/><rect x="10.7" y="2.2" width="2" height="0.55" fill="#7cc47c"/><rect x="3.5" y="3.6" width="1.2" height="0.55" fill="#7cc47c"/><rect x="6.3" y="3.6" width="1.2" height="0.55" fill="#7cc47c"/><rect x="3.5" y="5.0" width="3.6" height="0.55" fill="#bdbdbd"/><rect x="8.1" y="5.0" width="3.6" height="0.55" fill="#bdbdbd"/><rect x="1.5" y="6.4" width="1.2" height="0.55" fill="#8f8ff0"/><rect x="3.3" y="6.4" width="3.6" height="0.55" fill="#7cc47c"/><rect x="7.9" y="6.4" width="3.6" height="0.55" fill="#bdbdbd"/><rect x="3.5" y="7.8" width="3.6" height="0.55" fill="#d08a8a"/><rect x="8.1" y="7.8" width="3.6" height="0.55" fill="#d08a8a"/><rect x="0.5" y="9.2" width="2" height="0.55" fill="#bdbdbd"/><rect x="3.5" y="9.2" width="1.2" height="0.55" fill="#bdbdbd"/><rect x="2.5" y="10.6" width="1.2" height="0.55" fill="#7cc47c"/><rect x="5.3" y="10.6" width="3.6" height="0.55" fill="#8f8ff0"/><rect x="3.5" y="12.0" width="1.2" height="0.55" fill="#7cc47c"/><rect x="0.5" y="14.8" width="2.8" height="0.55" fill="#d08a8a"/><rect x="4.3" y="14.8" width="2" height="0.55" fill="#8f8ff0"/><rect x="7.3" y="14.8" width="1.2" height="0.55" fill="#8f8ff0"/><rect x="0.5" y="16.2" width="3.6" height="0.55" fill="#7cc47c"/><rect x="5.7" y="16.2" width="2.8" height="0.55" fill="#7cc47c"/><rect x="10.1" y="16.2" width="1.2" height="0.55" fill="#bdbdbd"/><rect x="2.5" y="17.6" width="3.6" height="0.55" fill="#7cc47c"/><rect x="7.1" y="17.6" width="3.6" height="0.55" fill="#bdbdbd"/><rect x="0.5" y="19.0" width="2.8" height="0.55" fill="#7cc47c"/><rect x="4.9" y="19.0" width="2" height="0.55" fill="#7cc47c"/><rect x="7.9" y="19.0" width="2.8" height="0.55" fill="#d08a8a"/><rect x="3.5" y="24.6" width="2.8" height="0.55" fill="#d08a8a"/><rect x="7.9" y="24.6" width="2.8" height="0.55" fill="#bdbdbd"/><rect x="0.5" y="26.0" width="1.2" height="0.55" fill="#7cc47c"/><rect x="2.5" y="27.4" width="2.8" height="0.55" fill="#7cc47c"/><rect x="6.3" y="27.4" width="2" height="0.55" fill="#7cc47c"/><rect x="9.3" y="27.4" width="2.8" height="0.55" fill="#7cc47c"/><rect x="0.5" y="28.8" width="2" height="0.55" fill="#7cc47c"/><rect x="2.5" y="30.2" width="2" height="0.55" fill="#bdbdbd"/><rect x="5.5" y="30.2" width="1.2" height="0.55" fill="#8f8ff0"/><rect x="2.5" y="31.6" width="2" height="0.55" fill="#7cc47c"/><rect x="5.1" y="31.6" width="1.2" height="0.55" fill="#7cc47c"/><rect x="3.5" y="33.0" width="1.2" height="0.55" fill="#8f8ff0"/><rect x="6.3" y="33.0" width="2" height="0.55" fill="#7cc47c"/><rect x="2.5" y="34.4" width="1.2" height="0.55" fill="#bdbdbd"/><rect x="5.3" y="34.4" width="2.8" height="0.55" fill="#d08a8a"/><rect x="2.5" y="35.8" width="2.8" height="0.55" fill="#7cc47c"/><rect x="6.3" y="35.8" width="3.6" height="0.55" fill="#7cc47c"/><rect x="10.9" y="35.8" width="3.6" height="0.55" fill="#8f8ff0"/><rect x="3.5" y="38.6" width="2" height="0.55" fill="#8f8ff0"/><rect x="7.1" y="38.6" width="3.6" height="0.55" fill="#bdbdbd"/><rect x="12.3" y="38.6" width="2.8" height="0.55" fill="#d08a8a"/><rect x="0.5" y="40.0" width="2.8" height="0.55" fill="#8f8ff0"/><rect x="3.9" y="40.0" width="1.2" height="0.55" fill="#8f8ff0"/><rect x="1.5" y="41.4" width="3.6" height="0.55" fill="#d08a8a"/><rect x="5.7" y="41.4" width="1.2" height="0.55" fill="#7cc47c"/><rect x="8.5" y="41.4" width="1.2" height="0.55" fill="#7cc47c"/><rect x="1.5" y="42.8" width="3.6" height="0.55" fill="#8f8ff0"/><rect x="6.7" y="42.8" width="1.2" height="0.55" fill="#7cc47c"/><rect x="3.5" y="44.2" width="1.2" height="0.55" fill="#7cc47c"/><rect x="5.3" y="44.2" width="2" height="0.55" fill="#8f8ff0"/><rect x="1.5" y="45.6" width="2.8" height="0.55" fill="#bdbdbd"/><rect x="3.5" y="47.0" width="3.6" height="0.55" fill="#8f8ff0"/></g></svg><div class="mscroll"></div></div>
<div class="btabs">
<span class="tab " style="left:0px;width:34.4px">Struct...</span>
<span class="tab " style="left:34.4px;width:38.6px">Class V...</span>
<span class="tab " style="left:73px;width:24.4px">Pro...</span>
<span class="tab " style="left:97.4px;width:16.0px">S...</span>
<span class="tab act" style="left:113.4px;width:29.2px">Expl...</span>
<span class="tab code" style="left:143px;width:48.4px">Code</span>
<span class="tab prev" style="left:191.9px;width:46.4px">Preview</span>
<span class="tab " style="left:312.3px;width:26.5px">Index</span>
<span class="tab " style="left:338.8px;width:57.9px">Dynamic He...</span>
<span class="tab " style="left:396.7px;width:43.3px">Properties</span>
<span class="tab act bold" style="left:440px;width:22px">Map</span>
</div>
<div class="ohead"><span class="otitle">Output</span></div>
<span class="pin" style="left:443px;top:275px"><svg width="16" height="10" viewBox="0 0 16 10"><rect x="2.5" y="1" width="3" height="4.3" fill="#666"/><path d="M2.1 1.1 H5.9" stroke="#555" stroke-width="0.7"/><path d="M1.6 5.5 H6.4" stroke="#444" stroke-width="0.8"/><path d="M4 5.8 V8" stroke="#999" stroke-width="0.7"/><path d="M10.8 2.5 L14.8 6.5 M14.8 2.5 L10.8 6.5" stroke="#111" stroke-width="1.5"/></svg></span>
<div class="obody"></div>
<div class="otabs">
<span class="tab " style="left:0px;width:30px">TODO</span>
<span class="tab " style="left:30px;width:60px">Search Result</span>
<span class="tab " style="left:90px;width:45px">Call Stack</span>
<span class="tab " style="left:135px;width:30.6px">Locals</span>
<span class="tab " style="left:165.6px;width:30.9px">Watch</span>
<span class="tab act" style="left:196.5px;width:33.5px">Output</span>
<span class="tab " style="left:230px;width:49.5px">Bookmarks</span>
<span class="tab " style="left:279.5px;width:29.3px">Errors</span>
</div>
<div class="status">
<span style="left:1.6px">Ready</span>
<span style="left:263.1px">UTF-8</span>
<span style="left:289.5px">Unix</span>
<span style="left:315px">Ln: 5</span>
<span style="left:340px">Col: 12</span>
<span style="left:373.3px">Ch: 12</span>
<span style="left:404.2px">Sel: 0|0</span>
<span style="left:437px">INS</span>
<i class="sq" style="left:250.5px"></i>
</div>
</div>
<div id="kon">
  <div class="ktitle"><span class="kt">derrik : bash — Konsole</span>
    <svg class="kbtn" width="30" height="12" viewBox="0 0 30 12"><path d="M1.5 4.5 L4 7 L6.5 4.5" fill="none" stroke="#c8ccce" stroke-width="1"/><path d="M12.5 7 L15 4.5 L17.5 7" fill="none" stroke="#c8ccce" stroke-width="1"/><circle cx="25.5" cy="6" r="3.6" fill="#d0d3d5"/><path d="M24 4.5 L27 7.5 M27 4.5 L24 7.5" stroke="#232d33" stroke-width="1"/></svg>
  </div>
  <div class="kmenu"><span>File</span><span>Edit</span><span>View</span><span>Bookmarks</span><span>Settings</span><span>Help</span></div>
  <div class="kline"></div>
  <pre class="kterm"><span class="c">derrik</span><span class="g">:</span><span class="db">~</span> <span class="g">neofetch</span>
<b class="b">          /:-------------:\</b>           <b class="b">derrik</b><span class="g">@</span><b class="b">ryzen-desktop</b>
<b class="b">       :-------------------::</b>         <span class="g">--------------------</span>
<b class="b">     :-----------</b><b class="w">/shhOHbmp</b><b class="b">---:\</b>       <b class="b">OS</b><span class="g">: Fedora 29 (Twenty Nine) x86_64</span>
<b class="b">   /-----------</b><b class="w">omMMMNNNMMD  </b><b class="b">---:</b>      <b class="b">Kernel</b><span class="g">: 4.20.14-200.fc29.x86_64</span>
<b class="b">  :-----------</b><b class="w">sMMMMNMNMP</b><b class="b">.    ---:</b>     <b class="b">Uptime</b><span class="g">: 1 day, 15 hours, 15 mins</span>
<b class="b"> :-----------</b><b class="w">:MMMdP</b><b class="b">-------    ---\</b>    <b class="b">Packages</b><span class="g">: 3346 (rpm), 12 (flatpak)</span>
<b class="b">,------------</b><b class="w">:MMMd</b><b class="b">--------    ---:</b>    <b class="b">Shell</b><span class="g">: bash 4.4.23</span>
<b class="b">:------------</b><b class="w">:MMMd</b><b class="b">-------    .---:</b>    <b class="b">Resolution</b><span class="g">: 1920x1080</span>
<b class="b">:----    </b><b class="w">oNMMMMMMMMMNho</b><b class="b">     .----:</b>    <b class="b">DE</b><span class="g">: KDE</span>
<b class="b">:--     .</b><b class="w">+shhhMMMmhhy++</b><b class="b">   .------/</b>    <b class="b">WM</b><span class="g">: KWin</span>
<b class="b">:-    -------</b><b class="w">:MMMd</b><b class="b">--------------:</b>     <b class="b">WM Theme</b><span class="g">: breeze</span>
<b class="b">:-   --------</b><b class="w">/MMMd</b><b class="b">-------------;</b>      <b class="b">Theme</b><span class="g">: Adapta [KDE], Adwaita [GTK2], Adapta [GTK3</span>
<b class="b">:-    ------</b><b class="w">/hMMMy</b><b class="b">------------:</b>       <b class="b">Icons</b><span class="g">: Papirus [KDE], Adwaita [GTK2], Papirus [GT</span>
<b class="b">:-- </b><b class="w">:dMNdhhdNMMNo</b><b class="b">------------;</b>        <b class="b">Terminal</b><span class="g">: konsole</span>
<b class="b">:---</b><b class="w">:sdNMMMMNds:</b><b class="b">------------:</b>         <b class="b">Terminal Font</b><span class="g">: Monospace 16</span>
<b class="b">:------</b><b class="w">:://:</b><b class="b">-------------::</b>           <b class="b">CPU</b><span class="g">: AMD Ryzen 5 1600X (12) @ 3.600GHz</span>
<b class="b">:---------------------://</b>             <b class="b">GPU</b><span class="g">: NVIDIA GeForce GTX 1060 6GB</span>
                                      <b class="b">Memory</b><span class="g">: 6165MiB / 16035MiB</span>
                                         <span style="background:#b21818">   </span><span style="background:#18b218">   </span><span style="background:#b26818">   </span><span style="background:#1818b2">   </span><span style="background:#b218b2">   </span><span style="background:#18b2b2">   </span><span style="background:#b2b2b2">   </span>
<span class="c">derrik</span><span class="g">:</span><span class="db">~</span> <span class="cur"> </span></pre>
  <svg class="ibeam" width="6" height="12" viewBox="0 0 6 12"><path d="M1 1 H5 M3 1 V11 M1 11 H5" stroke="#222" stroke-width="2.2" fill="none"/><path d="M1.2 1 H4.8 M3 1 V11 M1.2 11 H4.8" stroke="#d8d8d8" stroke-width="1.1" fill="none"/></svg>
</div>
</div>
</body></html>
